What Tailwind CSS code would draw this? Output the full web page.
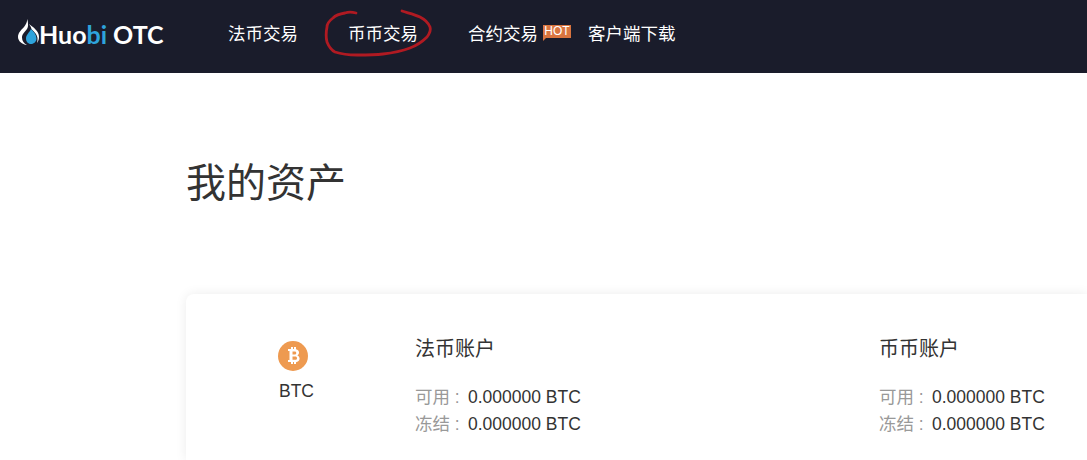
<!DOCTYPE html>
<html lang="zh">
  <head>
    <meta charset="UTF-8" />
    <title>Huobi OTC</title>
    <script src="https://cdn.jsdelivr.net/npm/@tailwindcss/browser@4"></script>
  </head>
  <body class="bg-white text-[#333] h-[460px] overflow-hidden font-['Liberation_Sans','Noto_Sans_CJK_SC',sans-serif]">
    <header class="relative h-[73px] bg-[#1a1c2b] flex items-center pl-[18px] text-white">
      <a href="#" class="flex items-center w-[210px] mb-[5px] font-['Lato','Liberation_Sans',sans-serif] font-bold text-[25px] leading-none">
        <svg class="w-[21px] h-[26px] mb-[4px]" viewBox="0 0 21 26">
          <path d="M9 0c.5 3-1 5-3 8C3 11 0 14 0 18c0 4 4 7.500 9 8-3-1.500-5-4-5-7.500C4 15 7 13 9 10c1-2 1-3 1-4 1 1 0 0 0 0C10 4 10 2 9 0z" fill="#fff" />
          <path d="M11 5c4 3 10 7 10 13 0 2-.5 4-2 6 .5-1.500.5-3 .5-4.500 0-3.500-3-6.500-6-9.500-.5-2-1.500-3.500-2.500-5z" fill="#fff" />
          <path d="M13 10c3 3 5.500 6 5.500 9.500 0 3-2.500 5.500-5.500 5.500s-5-2.500-5-5.500C8 16 11 14 13 10z" fill="#2ea3dc" />
        </svg>
        <span>Huo</span><span class="text-[#2ea3dc]">bi</span><span class="ml-[6px]">OTC</span>
      </a>
      <nav class="flex gap-[50px] mb-[4px] text-[17.5px] leading-none">
        <a href="#">法币交易</a>
        <a href="#">币币交易</a>
        <a href="#" class="relative">合约交易
          <span class="absolute left-[75px] top-[-1px] w-[28px] h-[13px] bg-[#d9743f] text-[12px] leading-[13px] text-center font-normal">HOT
            <span class="absolute left-0 top-[13px] border-t-[3px] border-r-[3px] border-t-[#d9743f] border-r-transparent"></span>
          </span>
        </a>
        <a href="#">客户端下载</a>
      </nav>
      <svg class="absolute left-[320px] top-[5px] w-[120px] h-[55px]" viewBox="0 0 120 55" fill="none">
        <path d="M36 8C32 7 28 7 25 8 19 9 15 11 13 13 9 16 7 19 7 22 6 27 6 33 7 37 9 42 11 45 15 47 21 49 29 50 37 50 46 50 55 50 63 49 72 48 82 46 90 43 98 40 103 36 107 32 110 28 111 25 110 22 108 17 104 14 100 12 94 9 88 8 82 6" stroke="#b01a22" stroke-width="2.800" stroke-linecap="round" />
      </svg>
    </header>

    <main class="pl-[186px]">
      <h1 class="pt-[82px] text-[40px] leading-[56px] font-normal">我的资产</h1>

      <section class="mt-[83px] h-[166px] rounded-tl-[8px] bg-white shadow-[0_0_12px_rgba(0,0,0,0.08)] pt-[38px] pl-[92px] flex items-start">
        <div class="w-[137px] pt-[9px]">
          <svg class="w-[30px] h-[30px]" viewBox="0 0 30 30">
            <circle cx="15" cy="15" r="15" fill="#ee9a50" />
            <path fill-rule="evenodd" fill="#fff" d="M10 8h3V6h2v2h1V6h2v2.200c2 .5 3 1.800 3 3.300 0 1.300-.6 2.300-1.600 2.900 1.400.5 2.200 1.700 2.200 3.200 0 2.200-1.600 3.400-3.600 3.700V23h-2v-2h-1v2h-2v-2h-3v-2h1.500v-9H10V8zm4.500 2.500v3h2.300c.9 0 1.500-.6 1.500-1.500s-.6-1.500-1.500-1.500h-2.300zm0 5v3.300h2.800c1 0 1.700-.7 1.700-1.650s-.7-1.650-1.700-1.650h-2.800z" />
          </svg>
          <p class="ml-px mt-[8px] text-[17.5px] leading-[24px]">BTC</p>
        </div>
        <div class="w-[464px]">
          <h2 class="pt-px text-[20px] leading-[32px] font-normal">法币账户</h2>
          <div class="mt-[19px] text-[17.5px] leading-[27px]">
            <p><span class="inline-block w-[53px] text-[#999]">可用 :</span>0.000000 BTC</p>
            <p><span class="inline-block w-[53px] text-[#999]">冻结 :</span>0.000000 BTC</p>
          </div>
        </div>
        <div>
          <h2 class="pt-px text-[20px] leading-[32px] font-normal">币币账户</h2>
          <div class="mt-[19px] text-[17.5px] leading-[27px]">
            <p><span class="inline-block w-[53px] text-[#999]">可用 :</span>0.000000 BTC</p>
            <p><span class="inline-block w-[53px] text-[#999]">冻结 :</span>0.000000 BTC</p>
          </div>
        </div>
      </section>
    </main>
  </body>
</html>
